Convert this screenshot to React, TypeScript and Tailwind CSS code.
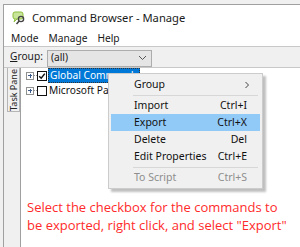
import React from 'react';

const ui = { fontFamily: '"Noto Sans", "Open Sans", sans-serif' };

function Expander() {
  return (
    <span className="relative flex h-[8px] w-[8px] items-center justify-center border border-[#919191] bg-white">
      <span className="absolute h-px w-[4px] bg-[#3c5a8a]" />
      <span className="absolute h-[4px] w-px bg-[#3c5a8a]" />
    </span>
  );
}

function CheckBox({ checked }: { checked?: boolean }) {
  return (
    <span className="flex h-[10px] w-[10px] items-center justify-center border-[1.5px] border-[#111] bg-white">
      {checked && (
        <svg width="8" height="8" viewBox="0 0 8 8">
          <path d="M1.2 4.2 L3.2 6.2 L6.8 1.6" fill="none" stroke="#111" strokeWidth="1.5" />
        </svg>
      )}
    </span>
  );
}

function MenuItem({ label, keys, active, disabled, arrow }: { label: string; keys?: string; active?: boolean; disabled?: boolean; arrow?: boolean }) {
  return (
    <div className={`mx-[2px] flex h-[17px] items-center whitespace-nowrap pl-[23px] pr-[13px] ${active ? 'bg-[#91c9f7]' : ''} ${disabled ? 'text-[#8d8d8d]' : 'text-[#111]'}`}>
      <span className="flex-1">{label}</span>
      {keys && <span>{keys}</span>}
      {arrow && (
        <svg width="6" height="8" viewBox="0 0 6 8" className="mr-[-3px]">
          <path d="M1.5 1 L4.5 4 L1.5 7" fill="none" stroke="#444" strokeWidth="1" />
        </svg>
      )}
    </div>
  );
}

function Sep() {
  return <div className="mb-[1px] ml-[24px] mr-[4px] mt-[2px] h-px bg-[#d7d7d7]" />;
}

export default function App() {
  return (
    <div className="relative flex h-[247px] w-[300px] flex-col overflow-hidden bg-[#f0f0f0] text-[10px]" style={ui}>
      {/* window frame */}
      <div className="ml-[3px] mt-[4px] flex flex-1 flex-col border-l border-t border-[#a0a0a0]">
        {/* title bar */}
        <div className="flex h-[26px] items-center gap-[6px] bg-white pl-[8px] text-[11.2px] text-[#1a1a1a]">
          <svg width="14" height="14" viewBox="0 0 14 14">
            <rect x="1" y="1" width="10" height="7" rx="2" fill="#c9e59a" stroke="#8cbf3f" strokeWidth="1" />
            <path d="M3 8 L2 11 L5 8" fill="#c9e59a" stroke="#8cbf3f" strokeWidth="1" />
            <circle cx="9" cy="8" r="2.6" fill="none" stroke="#444" strokeWidth="1.4" />
            <path d="M7.2 10 L4.5 13" stroke="#444" strokeWidth="1.6" />
          </svg>
          <span>Command Browser - Manage</span>
        </div>
        {/* menu bar */}
        <div className="flex h-[15px] items-center gap-[10px] bg-white pl-[7px] text-[10.2px] text-[#1a1a1a]">
          <span>Mode</span>
          <span>Manage</span>
          <span>Help</span>
        </div>
        {/* toolbar */}
        <div className="flex h-[22px] items-center gap-[4px] border-y border-[#c8c8c8] bg-[#f0f0f0] pl-[6px] text-[10.2px] text-[#1a1a1a]">
          <span>
            <span className="underline">G</span>roup:
          </span>
          <div className="mt-[2px] flex h-[17px] w-[105px] items-center justify-between border border-[#adadad] bg-[#e5e5e5] pl-[3px] pr-[4px]">
            <span>(all)</span>
            <svg width="9" height="6" viewBox="0 0 9 6">
              <path d="M1 1 L4.5 4.5 L8 1" fill="none" stroke="#555" strokeWidth="1" />
            </svg>
          </div>
        </div>
        {/* body */}
        <div className="flex flex-1">
          <div className="w-[17px] border-r border-[#a0a0a0] bg-[#f0f0f0] pl-[3px]">
            <div className="flex h-[44px] w-[13px] items-center justify-center border border-t-0 border-[#b5b5b5] bg-[#f0f0f0] text-[9px] text-[#222]">
              <span className="rotate-180 whitespace-nowrap [writing-mode:vertical-rl]">Task Pane</span>
            </div>
          </div>
          <div className="flex flex-1 flex-col bg-white">
            <div className="flex flex-col pl-[5px] text-[10.2px]">
              <div className="flex h-[15px] items-center">
                <Expander />
                <span className="w-[3px] border-t border-dotted border-[#999]" />
                <CheckBox checked />
                <span className="ml-[1px] whitespace-nowrap border border-dotted border-[#333] bg-[#0078d7] px-[1px] leading-[13px] text-white">Global Commands</span>
              </div>
              <div className="flex h-[15px] items-center">
                <Expander />
                <span className="w-[3px] border-t border-dotted border-[#999]" />
                <CheckBox />
                <span className="ml-[2px] whitespace-nowrap text-[#111]">Microsoft Paint</span>
              </div>
            </div>
            <div className="mt-[100px] whitespace-nowrap pl-[6px] text-[13px] leading-[18px] text-[#ff2b2b]" style={{ fontFamily: '"Open Sans", "Noto Sans", sans-serif' }}>
              Select the checkbox for the commands to
              <br />
              be exported, right click, and select "Export"
            </div>
          </div>
        </div>
      </div>

      {/* context menu */}
      <div className="absolute left-[108px] top-[73px] w-[155px] border border-[#cccccc] bg-[#f0f0f0] py-[2px] text-[10.5px] shadow-[3px_3px_2px_rgba(0,0,0,0.25)]">
        <MenuItem label="Group" arrow />
        <Sep />
        <MenuItem label="Import" keys="Ctrl+I" />
        <MenuItem label="Export" keys="Ctrl+X" active />
        <MenuItem label="Delete" keys="Del" />
        <MenuItem label="Edit Properties" keys="Ctrl+E" />
        <Sep />
        <MenuItem label="To Script" keys="Ctrl+S" disabled />
      </div>
    </div>
  );
}
